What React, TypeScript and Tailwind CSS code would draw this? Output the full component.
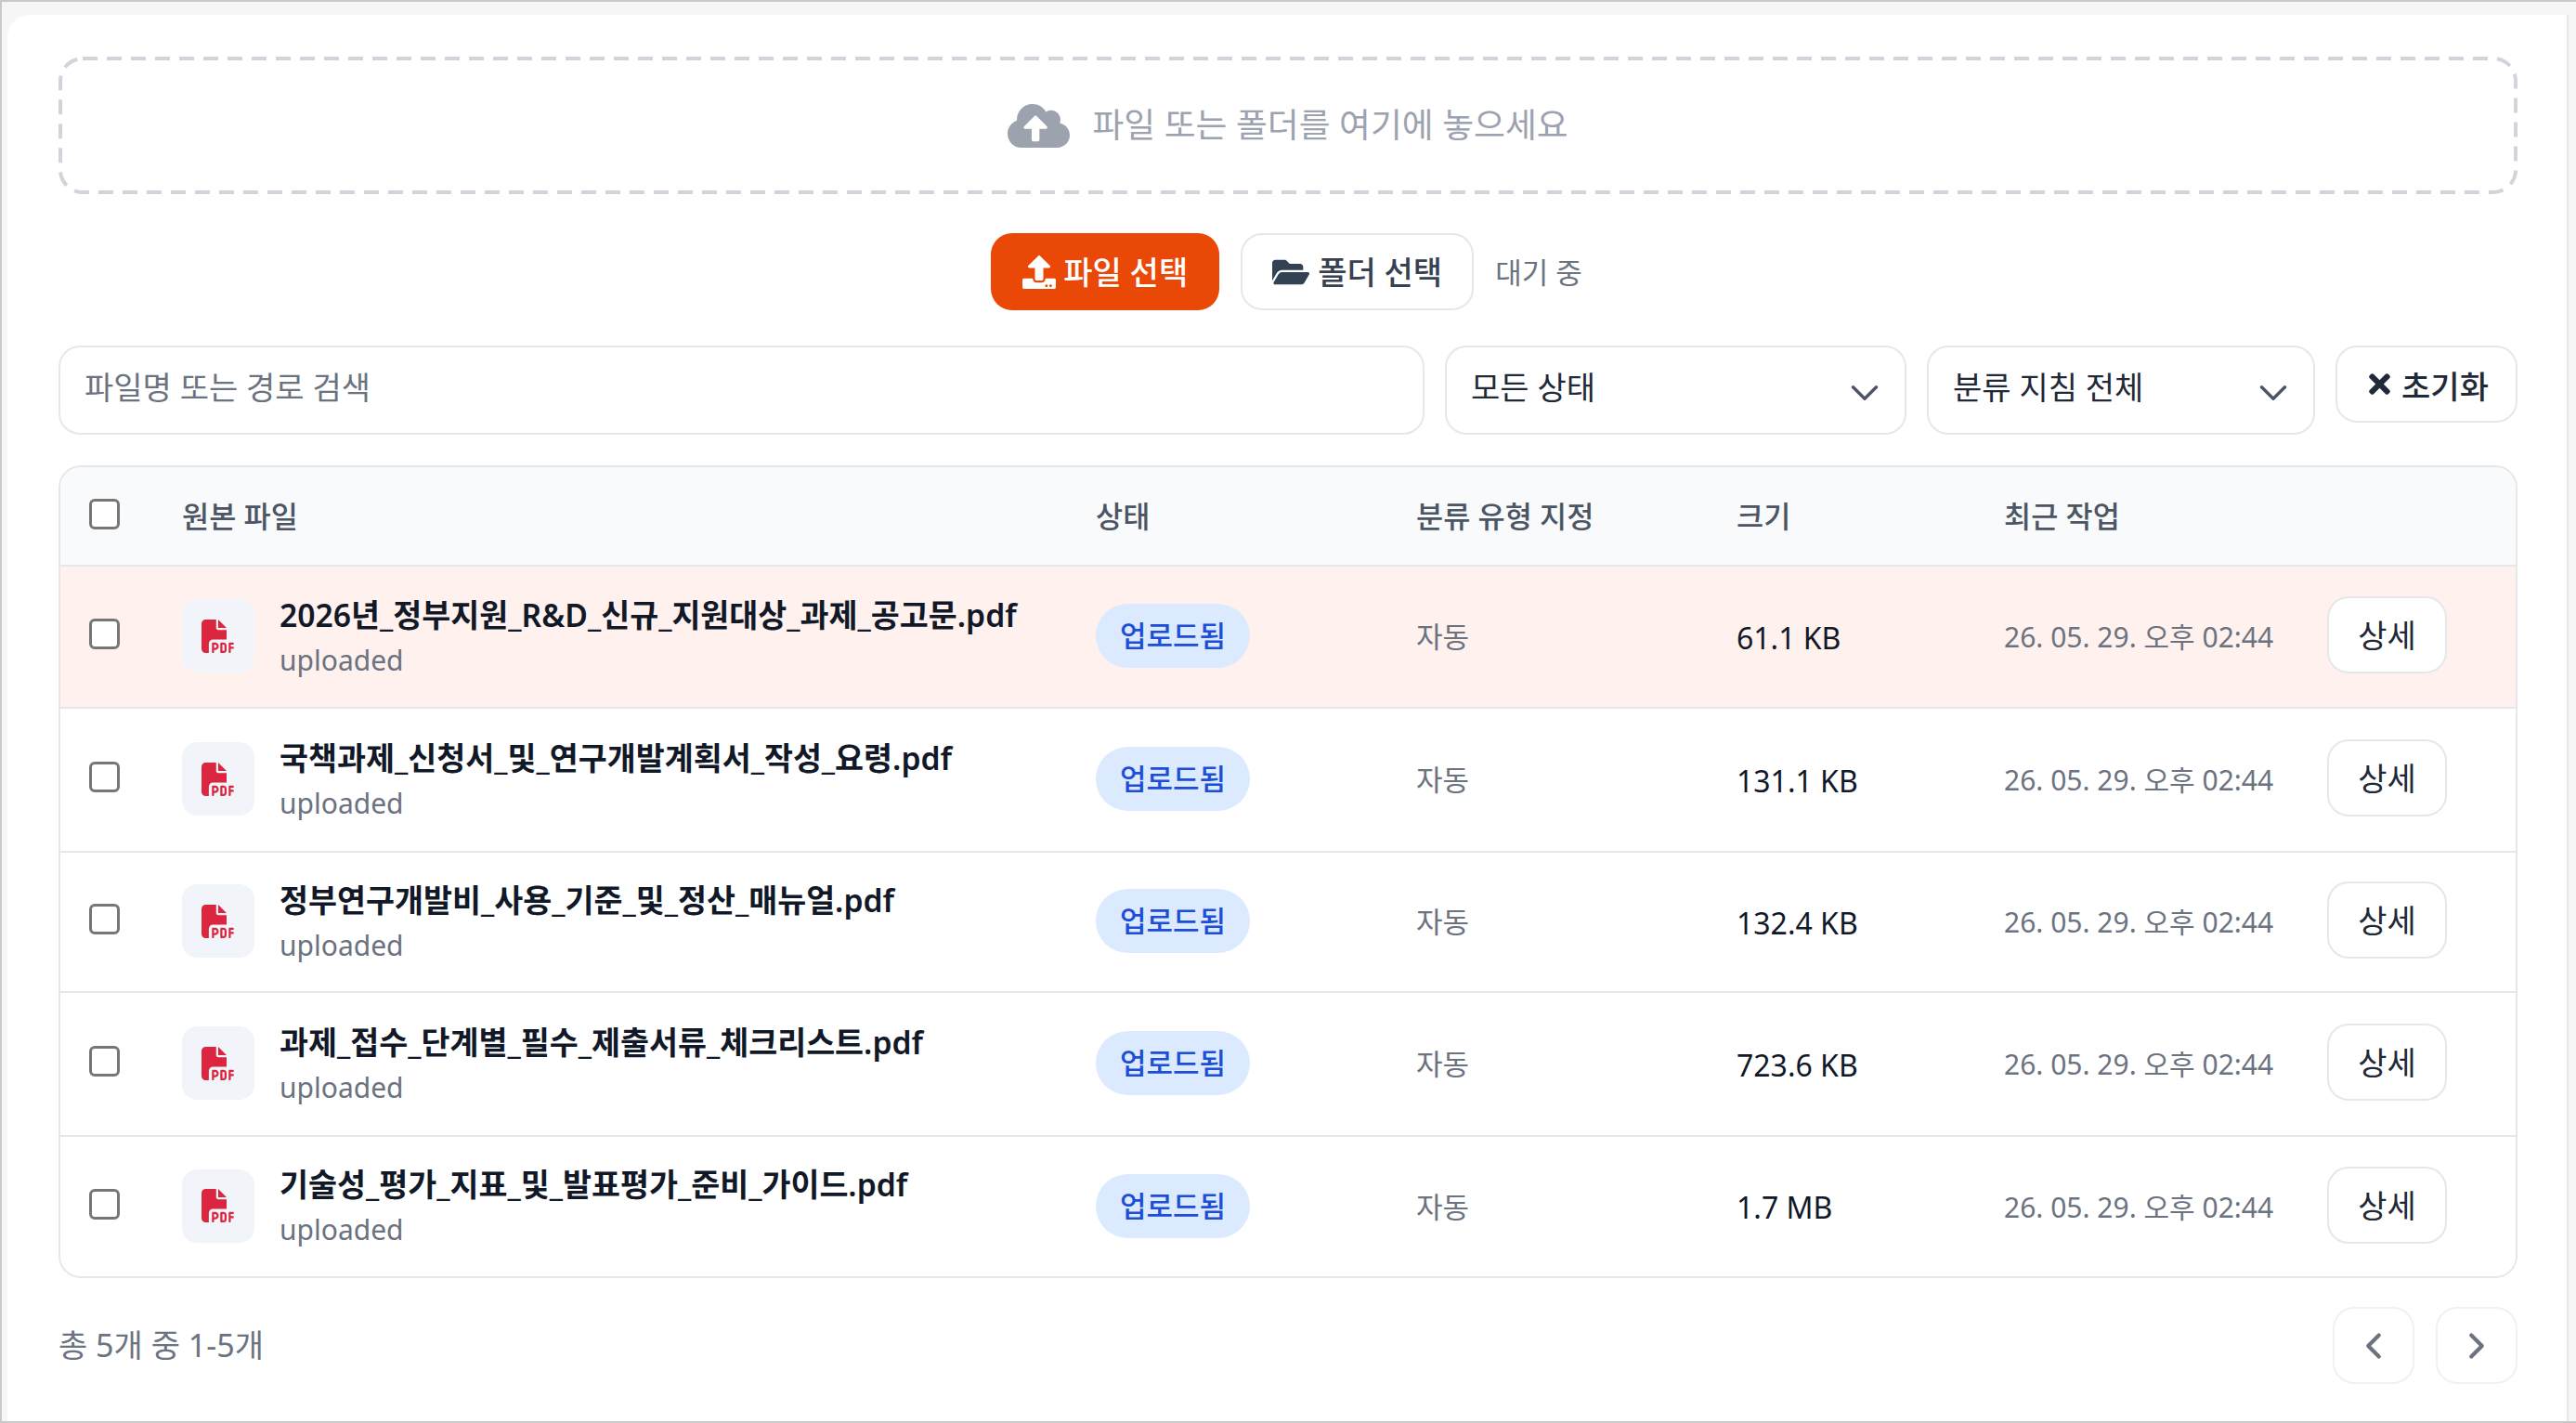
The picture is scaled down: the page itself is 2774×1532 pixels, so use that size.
import React from "react";
import { FaCloudUploadAlt, FaUpload, FaFolderOpen, FaTimes } from "react-icons/fa";
import { FaFilePdf } from "react-icons/fa6";
import { ChevronDown, ChevronLeft, ChevronRight } from "lucide-react";

const rows = [
  { name: "2026년_정부지원_R&D_신규_지원대상_과제_공고문.pdf", size: "61.1 KB", h: "h-[153px]", bg: "bg-[#fff1ee]" },
  { name: "국책과제_신청서_및_연구개발계획서_작성_요령.pdf", size: "131.1 KB", h: "h-[155px]", bg: "bg-white" },
  { name: "정부연구개발비_사용_기준_및_정산_매뉴얼.pdf", size: "132.4 KB", h: "h-[151px]", bg: "bg-white" },
  { name: "과제_접수_단계별_필수_제출서류_체크리스트.pdf", size: "723.6 KB", h: "h-[155px]", bg: "bg-white" },
  { name: "기술성_평가_지표_및_발표평가_준비_가이드.pdf", size: "1.7 MB", h: "h-[152px]", bg: "bg-white" },
];

const gridCols = "grid grid-cols-[131px_984px_345px_345px_288px_348px_1fr] items-center";

function Check() {
  return <input type="checkbox" className="w-[33px] h-[33px] appearance-none rounded-[6px] border-[3px] border-[#767676] bg-white" />;
}

export default function App() {
  return (
    <div className="w-[2774px] h-[1532px] overflow-hidden border-y-2 border-l-2 border-[#c9c9c9] bg-[#f6f6f6] pt-[14px] pl-[6px] pr-[8px] [font-family:'Noto_Sans','Noto_Sans_CJK_KR',sans-serif]">
      <div className="h-full bg-white rounded-tl-[24px] border-r-2 border-[#e5e7eb] pl-[55px] pr-[53px] pt-[45px]">
        <div className="relative h-[148px] flex items-center justify-center gap-[24px] text-[#9ca3af] text-[36.8px]">
          <svg className="absolute inset-0 w-full h-full" fill="none">
            <rect x="2" y="2" width="2644" height="144" rx="24" stroke="#d1d5db" strokeWidth="4" strokeDasharray="16 10" />
          </svg>
          <FaCloudUploadAlt size={67} />
          <span>파일 또는 폴더를 여기에 놓으세요</span>
        </div>

        <div className="mt-[42px] flex items-center justify-center gap-[23px] pr-[3px]">
          <button className="h-[83px] px-[34px] rounded-[23px] bg-[#e94807] text-white text-[34px] font-medium flex items-center gap-[8px]">
            <FaUpload size={36} />
            <span className="pt-[2px]">파일 선택</span>
          </button>
          <button className="h-[83px] px-[32px] rounded-[23px] bg-white border-2 border-[#e5e7eb] text-[#374151] text-[34px] font-medium flex items-center gap-[9px]">
            <FaFolderOpen size={40} className="text-[#334155]" />
            <span className="pt-[2px]">폴더 선택</span>
          </button>
          <span className="text-[31px] text-[#6b7280] pt-[2px]">대기 중</span>
        </div>

        <div className="mt-[38px] flex items-start gap-[22px]">
          <input
            placeholder="파일명 또는 경로 검색"
            className="w-[1471px] h-[96px] rounded-[23px] border-2 border-[#e5e7eb] bg-white px-[26px] pb-[6px] text-[34px] placeholder:text-[#6b7280]"
          />
          <div className="w-[497px] h-[96px] rounded-[23px] border-2 border-[#e5e7eb] bg-white pl-[26px] pr-[18px] flex items-center justify-between text-[34px] text-[#1f2937]">
            <span className="pb-[6px]">모든 상태</span>
            <ChevronDown size={50} strokeWidth={1.6} className="text-[#4b5563] mt-[6px]" />
          </div>
          <div className="w-[418px] h-[96px] rounded-[23px] border-2 border-[#e5e7eb] bg-white pl-[26px] pr-[18px] flex items-center justify-between text-[34px] text-[#1f2937]">
            <span className="pb-[6px]">분류 지침 전체</span>
            <ChevronDown size={50} strokeWidth={1.6} className="text-[#4b5563] mt-[6px]" />
          </div>
          <button className="flex-1 h-[83px] rounded-[23px] border-2 border-[#e5e7eb] bg-white text-[34px] font-medium text-[#1f2937] flex items-center justify-center gap-[7px]">
            <FaTimes size={33} />
            <span className="pt-[5px]">초기화</span>
          </button>
        </div>

        <div className="mt-[33px] rounded-[24px] border-2 border-[#e5e7eb] overflow-hidden">
          <div className={`${gridCols} h-[105px] bg-[#f9fafb] text-[#4b5563] text-[31.7px] font-medium`}>
            <div className="pl-[31px] mb-[4px] flex items-center"><Check /></div>
            <div>원본 파일</div>
            <div>상태</div>
            <div>분류 유형 지정</div>
            <div>크기</div>
            <div>최근 작업</div>
            <div />
          </div>
          {rows.map((r) => (
            <div key={r.name} className={`${gridCols} ${r.h} ${r.bg} border-t-2 border-[#e5e7eb]`}>
              <div className="pl-[31px] mb-[6px] flex items-center"><Check /></div>
              <div className="flex items-center gap-[27px]">
                <div className="w-[78px] h-[79px] mb-[2px] rounded-[16px] bg-[#f1f5f9] flex items-center justify-center">
                  <FaFilePdf size={36} className="text-[#dc2640]" />
                </div>
                <div className="flex flex-col">
                  <span className="text-[33.7px] leading-[48px] font-semibold text-[#111827]">{r.name}</span>
                  <span className="text-[30px] leading-[46px] pt-[2px] text-[#6b7280]">uploaded</span>
                </div>
              </div>
              <div className="mb-[2px]">
                <span className="inline-flex items-center h-[69px] px-[26px] rounded-full bg-[#dbeafe] text-[#1d4ed8] text-[31px] font-medium">업로드됨</span>
              </div>
              <div className="text-[31px] text-[#6b7280]">자동</div>
              <div className="text-[32px] pt-[2px] text-[#111827]">{r.size}</div>
              <div className="text-[30px] text-[#6b7280]">26. 05. 29. 오후 02:44</div>
              <div className="mb-[4px]">
                <button className="w-[129px] h-[83px] pt-[2px] rounded-[23px] border-2 border-[#e5e7eb] bg-white text-[34px] text-[#1f2937]">상세</button>
              </div>
            </div>
          ))}
        </div>

        <div className="mt-[31px] flex items-center justify-between">
          <span className="text-[34px] text-[#6b7280]">총 5개 중 1-5개</span>
          <div className="flex gap-[23px]">
            <button className="w-[88px] h-[83px] rounded-[23px] border-2 border-[#f0f1f3] flex items-center justify-center text-[#6b7280]"><ChevronLeft size={46} strokeWidth={2.2} /></button>
            <button className="w-[88px] h-[83px] rounded-[23px] border-2 border-[#f0f1f3] flex items-center justify-center text-[#6b7280]"><ChevronRight size={46} strokeWidth={2.2} /></button>
          </div>
        </div>
      </div>
    </div>
  );
}
